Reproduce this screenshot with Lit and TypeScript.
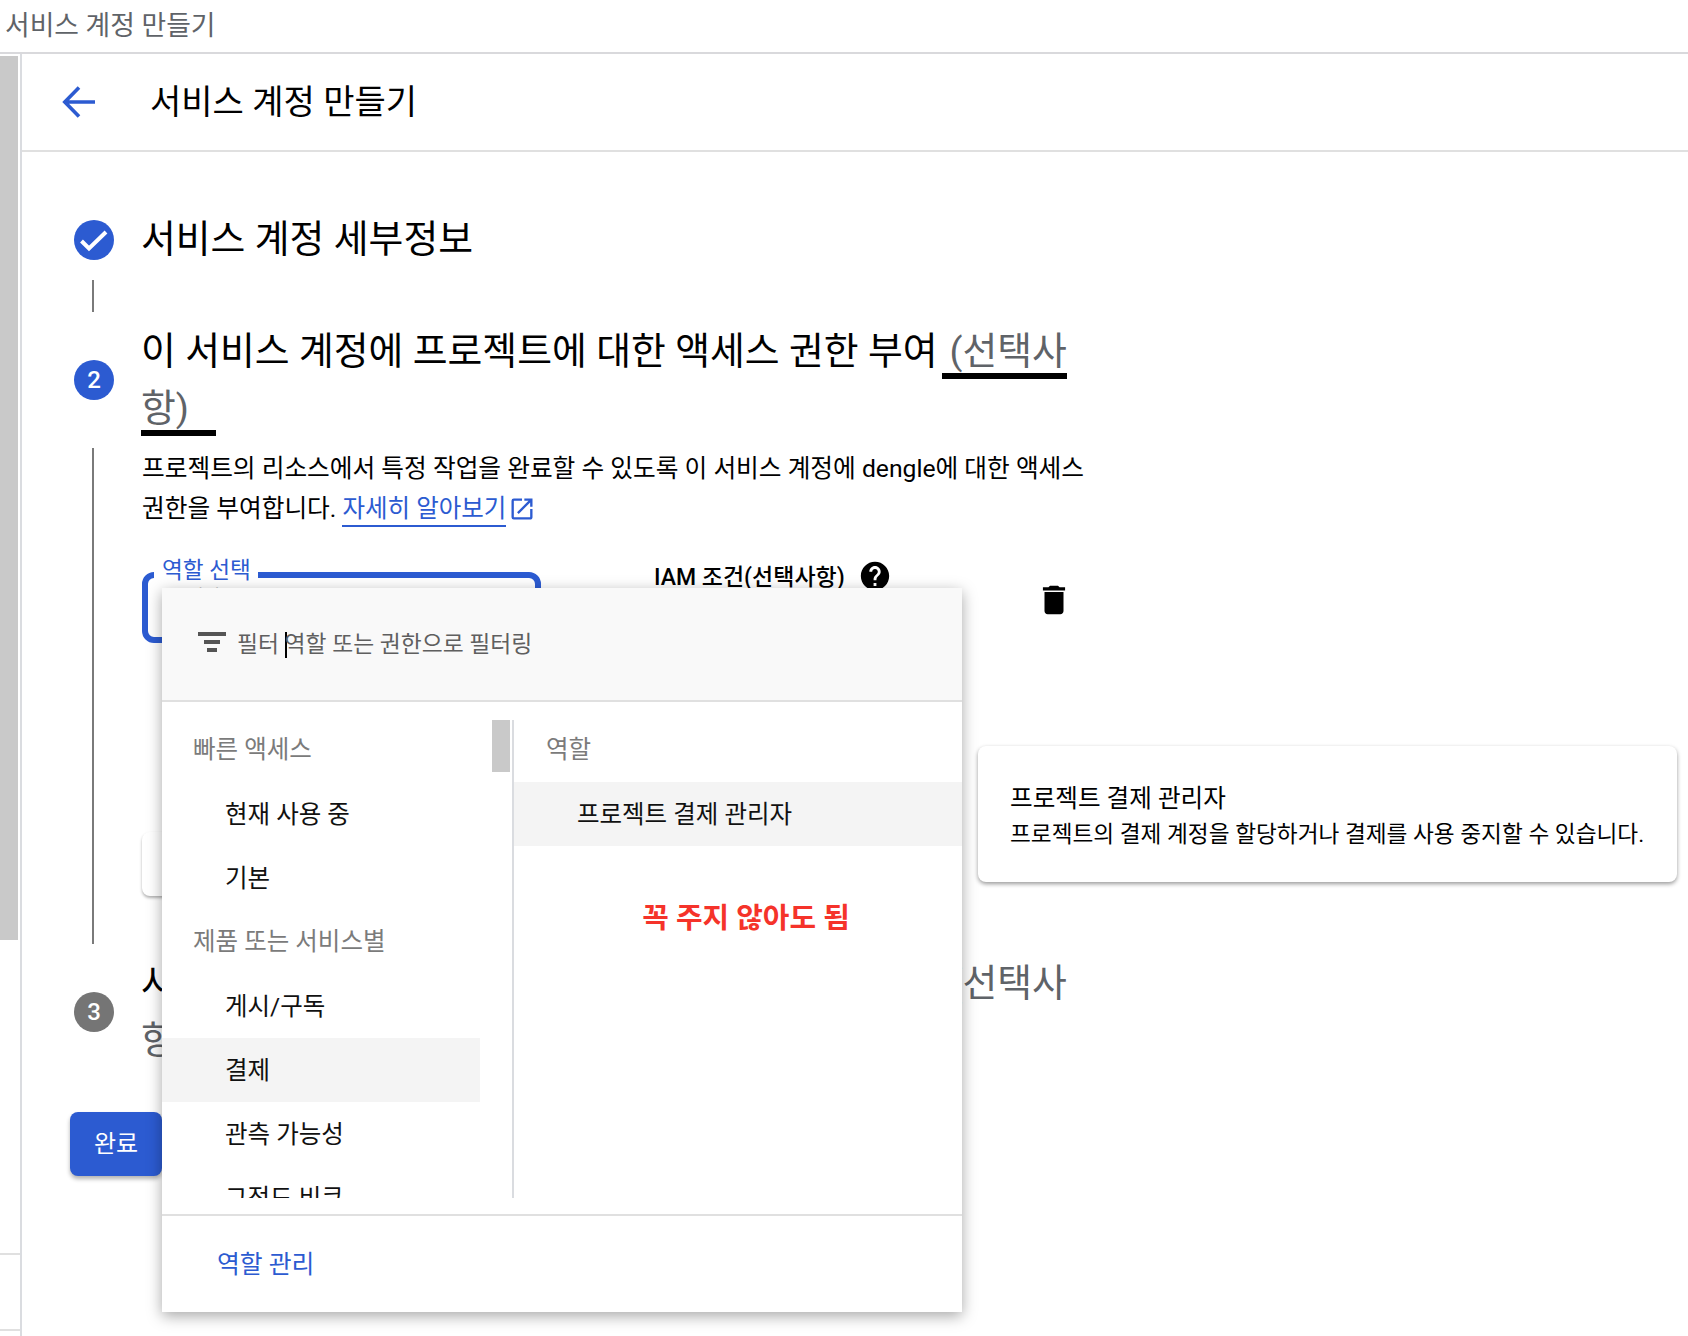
import { LitElement, html, css } from "lit";
import { customElement } from "lit/decorators.js";

const BLUE = "#2c5bd1";
const blue = css([BLUE] as any);

@customElement("app-root")
export class AppRoot extends LitElement {
  static styles = css`
    :host {
      display: block;
      width: 1688px;
      height: 1336px;
      overflow: hidden;
      position: relative;
      background: #fff;
      color: #000;
      font-family: Roboto, "Noto Sans CJK KR", sans-serif;
    }
    .topbar {
      border-bottom: 2px solid #d9d9dc;
      box-sizing: border-box;
      height: 54px;
      display: flex;
      align-items: center;
      padding: 0 0 6px 5px;
      font-size: 26.8px;
      color: #5f6368;
    }
    .body {
      display: flex;
      height: 1282px;
    }
    .rail {
      width: 20px;
      border-right: 2px solid #dadce0;
      display: flex;
      flex-direction: column;
      flex: none;
      box-sizing: content-box;
    }
    .rail-thumb {
      width: 18px;
      height: 884px;
      margin-top: 2px;
      background: #c9c9c9;
    }
    .rail-lines {
      margin-top: 313px;
      height: 74px;
      border-top: 2px solid #e0e0e0;
      border-bottom: 2px solid #e0e0e0;
    }
    .main { flex: 1; min-width: 0; }
    .head {
      height: 96px;
      border-bottom: 2px solid #e0e0e0;
      box-sizing: content-box;
      display: flex;
      align-items: center;
      padding-left: 40px;
      gap: 54px;
      font-size: 34px;
    }
    .head span { padding-bottom: 6px; }
    .head svg { width: 34px; height: 34px; flex: none; }
    .stepper { padding: 0 0 0 52px; }
    .step {
      display: flex;
      align-items: center;
      gap: 27px;
    }
    .num {
      flex: none;
      width: 40px;
      height: 40px;
      border-radius: 50%;
      background: ${blue};
      color: #fff;
      display: flex;
      align-items: center;
      justify-content: center;
      font-size: 24px;
      font-weight: 500;
    }
    .num.off { background: #757575; }
    .num svg { width: 40px; height: 40px; }
    .title {
      font-size: 37.85px;
      font-weight: 400;
      line-height: 57px;
      width: 930px;
    }
    .title.single { width: auto; }
    .title .opt {
      color: #5f6368;
      margin-left: 4px;
      padding: 0 27px 0 8px;
    }
    .title .opt.focus { border-bottom: 6px solid #000; }
    .one { padding-top: 59px; }
    .conn-a {
      width: 2px;
      height: 32px;
      background: #7a7a7a;
      margin: 12px 0 0 18px;
    }
    .two, .three { padding-top: 11px; }
    .two-body {
      margin: 11px 0 0 18px;
      border-left: 2px solid #7a7a7a;
      padding-left: 48px;
      height: 496px;
    }
    .desc {
      width: 950px;
      font-size: 24.7px;
      line-height: 40px;
      padding-top: 1px;
    }
    .desc a { color: ${blue}; font-size: 24.5px; text-decoration: none; border-bottom: 2px solid ${blue}; padding-bottom: 2px; }
    .desc svg { width: 28px; height: 28px; vertical-align: -6px; margin-left: 2px; }
    .fields { display: flex; align-items: flex-start; margin-top: 43px; }
    .select {
      width: 399px;
      height: 71px;
      box-sizing: border-box;
      border: 6px solid ${blue};
      border-radius: 12px;
      position: relative;
      flex: none;
    }
    .select label {
      position: absolute;
      left: 6px;
      top: -22px;
      padding: 0 7px 0 8px;
      background: #fff;
      color: ${blue};
      font-size: 22.6px;
      line-height: 30px;
    }
    .select span {
      position: absolute;
      left: 39px;
      top: 4px;
      color: #9a9a9a;
      font-size: 18px;
    }
    .iam {
      margin: -16px 0 0 113px;
      width: 268px;
      flex: none;
      display: flex;
      align-items: center;
      gap: 13px;
      font-size: 23px;
      font-weight: 500;
      height: 40px;
    }
    .iam span { padding-bottom: 2px; }
    .iam svg { width: 34px; height: 34px; flex: none; }
    .trash { width: 38px; height: 38px; margin-left: 113px; margin-top: 9px; flex: none; }
    .addcard {
      width: 300px;
      height: 64px;
      border-radius: 8px;
      background: #fff;
      box-shadow: 0 2px 3px rgba(0,0,0,.3);
      margin-top: 189px;
    }
    .done {
      margin: 43px 0 0 -4px;
      width: 92px;
      height: 64px;
      border: 0;
      padding: 0 0 6px;
      border-radius: 8px;
      background: ${blue};
      color: #fff;
      font: 400 24px Roboto, "Noto Sans CJK KR", sans-serif;
      box-shadow: 0 3px 4px rgba(0,0,0,.3);
      display: block;
    }
    .popup {
      position: absolute;
      left: 162px;
      top: 588px;
      width: 800px;
      height: 724px;
      background: #fff;
      box-shadow: 0 4px 14px rgba(0,0,0,.35);
      display: flex;
      flex-direction: column;
    }
    .filter {
      height: 108px;
      padding: 0 0 4px 36px;
      flex: none;
      background: #f9f9f9;
      border-bottom: 2px solid #e0e0e0;
      display: flex;
      align-items: center;
      gap: 11px;
      font-size: 22.8px;
      color: #5f5f5f;
      box-sizing: content-box;
    }
    .filter svg { width: 28px; height: 20px; flex: none; }
    .caret {
      display: inline-block;
      width: 2px;
      height: 26px;
      background: #000;
      vertical-align: -6px;
      margin-right: -2px;
    }
    .lists {
      flex: 1;
      min-height: 0;
      display: flex;
      padding-top: 18px;
      overflow: hidden;
      border-bottom: 2px solid #e0e0e0;
    }
    .col-l {
      width: 350px;
      height: 478px;
      overflow: hidden;
      border-right: 2px solid #dadce0;
      position: relative;
      flex: none;
      box-sizing: content-box;
    }
    .col-r { flex: 1; }
    .rows { margin-top: -2px; }
    .row {
      height: 64px;
      display: flex;
      align-items: center;
      font-size: 24.5px;
      padding: 0 0 4px 63px;
      width: 318px;
      box-sizing: border-box;
      color: #111;
    }
    .row.sec { color: #7b7b7b; padding: 0 0 6px 31px; }
    .row.hover { background: #f4f4f4; }
    .col-r .row { width: 100%; padding-left: 63px; }
    .col-r .row.sec { padding-left: 32px; }
    .thumb {
      position: absolute;
      right: 2px;
      top: 0;
      width: 18px;
      height: 52px;
      background: #c9c9c9;
    }
    .note {
      color: #f5332a;
      font-size: 28.9px;
      font-weight: 700;
      text-align: center;
      margin: 39px 0 0 16px;
      line-height: 66px;
    }
    .foot {
      height: 96px;
      flex: none;
      box-sizing: border-box;
      padding: 0 0 5px 55px;
      display: flex;
      align-items: center;
      color: ${blue};
      font-size: 24.8px;
    }
    .info {
      position: absolute;
      left: 978px;
      top: 746px;
      width: 699px;
      height: 136px;
      box-sizing: border-box;
      padding: 37px 20px 0 32px;
      background: #fff;
      border-radius: 8px;
      box-shadow: 0 2px 4px rgba(0,0,0,.4);
    }
    .info .t { font-size: 24.6px; line-height: 32px; }
    .info .d { font-size: 22.65px; line-height: 40px; white-space: nowrap; }
  `;

  render() {
    return html`
      <div class="topbar">서비스 계정 만들기</div>
      <div class="body">
        <div class="rail">
          <div class="rail-thumb"></div>
          <div class="rail-lines"></div>
        </div>
        <div class="main">
          <div class="head">
            <svg viewBox="0 0 34 34"><path fill="none" stroke="${BLUE}" stroke-width="3.6" d="M33 17H4M17 2.5 2.8 17 17 31.5"/></svg>
            <span>서비스 계정 만들기</span>
          </div>
          <div class="stepper">
            <div class="step one">
              <div class="num"><svg viewBox="0 0 40 40"><path fill="none" stroke="#fff" stroke-width="4" d="M7.5 21l7.5 7.5L32 12"/></svg></div>
              <div class="title single">서비스 계정 세부정보</div>
            </div>
            <div class="conn-a"></div>
            <div class="step two">
              <div class="num">2</div>
              <div class="title">이 서비스 계정에 프로젝트에 대한 액세스 권한 부여<span class="opt focus">(선택사항)</span></div>
            </div>
            <div class="two-body">
              <div class="desc">
                프로젝트의 리소스에서 특정 작업을 완료할 수 있도록 이 서비스 계정에 dengle에 대한 액세스 권한을 부여합니다.
                <a>자세히 알아보기</a><svg viewBox="0 0 24 24"><path fill="${BLUE}" d="M19 19H5V5h7V3H5a2 2 0 0 0-2 2v14a2 2 0 0 0 2 2h14c1.1 0 2-.9 2-2v-7h-2v7zM14 3v2h3.59l-9.83 9.83 1.41 1.41L19 6.41V10h2V3h-7z"/></svg>
              </div>
              <div class="fields">
                <div class="select"><label>역할 선택</label><span>필터</span></div>
                <div class="iam">
                  <span>IAM 조건(선택사항)</span>
                  <svg viewBox="0 0 24 24"><path d="M12 2C6.48 2 2 6.48 2 12s4.48 10 10 10 10-4.48 10-10S17.52 2 12 2zm1 17h-2v-2h2v2zm2.07-7.75-.9.92C13.45 12.9 13 13.5 13 15h-2v-.5c0-1.1.45-2.1 1.17-2.83l1.24-1.26c.37-.36.59-.86.59-1.41 0-1.1-.9-2-2-2s-2 .9-2 2H8c0-2.21 1.79-4 4-4s4 1.79 4 4c0 .88-.36 1.68-.93 2.25z"/></svg>
                </div>
                <svg class="trash" viewBox="0 0 24 24"><path d="M6 19c0 1.1.9 2 2 2h8c1.1 0 2-.9 2-2V7H6v12zM19 4h-3.5l-1-1h-5l-1 1H5v2h14V4z"/></svg>
              </div>
              <div class="addcard"></div>
            </div>
            <div class="step three">
              <div class="num off">3</div>
              <div class="title">사용자에게 이 서비스 계정에 대한 액세스 권한 부여<span class="opt">(선택사항)</span></div>
            </div>
            <button class="done">완료</button>
          </div>
        </div>
      </div>

      <div class="popup">
        <div class="filter">
          <svg viewBox="0 0 28 20"><path fill="#555" d="M0 0h28v4H0zM6 8h16v4H6zM9 16h10v4H9z"/></svg>
          <span>필터 <i class="caret"></i>역할 또는 권한으로 필터링</span>
        </div>
        <div class="lists">
          <div class="col-l">
            <div class="rows">
              <div class="row sec">빠른 액세스</div>
              <div class="row">현재 사용 중</div>
              <div class="row">기본</div>
              <div class="row sec">제품 또는 서비스별</div>
              <div class="row">게시/구독</div>
              <div class="row hover">결제</div>
              <div class="row">관측 가능성</div>
              <div class="row">그정도 비큐</div>
            </div>
            <div class="thumb"></div>
          </div>
          <div class="col-r">
            <div class="rows">
              <div class="row sec">역할</div>
              <div class="row hover">프로젝트 결제 관리자</div>
            </div>
            <div class="note">꼭 주지 않아도 됨</div>
          </div>
        </div>
        <div class="foot">역할 관리</div>
      </div>

      <div class="info">
        <div class="t">프로젝트 결제 관리자</div>
        <div class="d">프로젝트의 결제 계정을 할당하거나 결제를 사용 중지할 수 있습니다.</div>
      </div>
    `;
  }
}
